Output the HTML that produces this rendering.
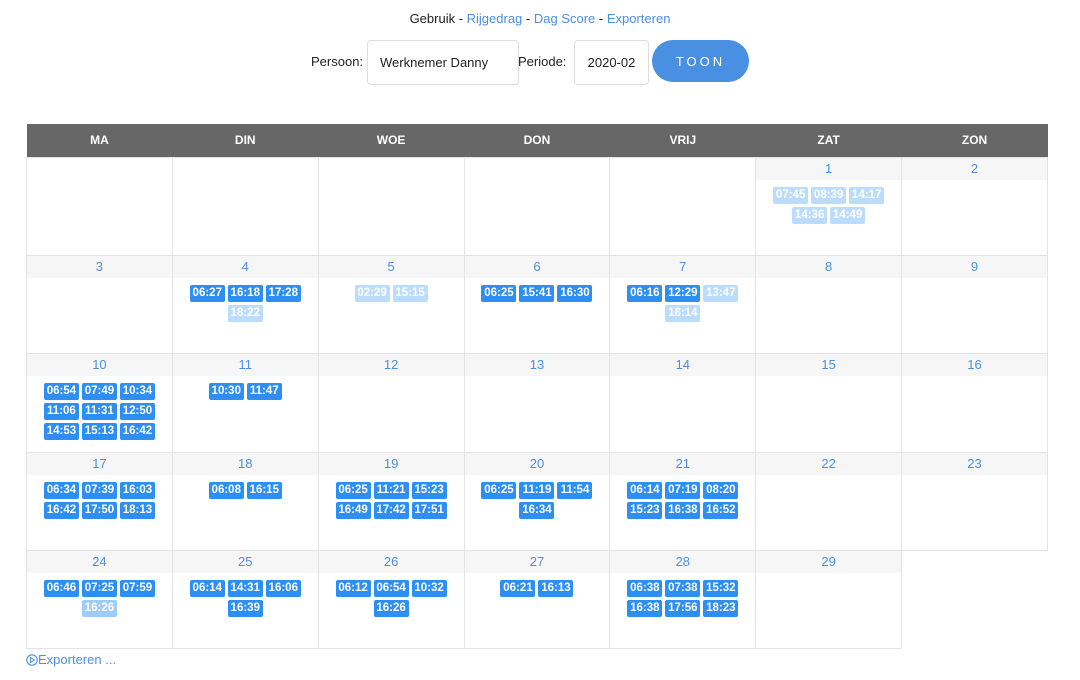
<!DOCTYPE html>
<html><head><meta charset="utf-8"><style>
*{box-sizing:border-box}
body{margin:0;width:1080px;height:680px;background:#fff;font-family:"Liberation Sans",sans-serif;position:relative;overflow:hidden}
.top{position:absolute;top:11px;left:0;width:1080px;text-align:center;font-size:13px;color:#222}
a{color:#4a90e2;text-decoration:none}
.lbl{position:absolute;font-size:13px;color:#222}
.inp{position:absolute;border:1px solid #ddd;border-radius:4px;background:#fff;font-size:13px;color:#222;display:flex;align-items:center;justify-content:center}
.btn{position:absolute;left:652px;top:40px;width:97px;height:42px;border-radius:21px;background:#4a90e2;color:#fff;font-size:13px;letter-spacing:3px;display:flex;align-items:center;justify-content:center}
table{position:absolute;left:26px;top:124px;width:1022px;border-collapse:collapse;table-layout:fixed}
th{background:#676767;color:#fff;font-size:12px;font-weight:bold;height:33px;padding:0}
td{border:1px solid #e3e3e3;height:98.4px;vertical-align:top;padding:0}
td.x{border:none}
.n{height:22px;background:#f6f6f6;color:#4a90e2;font-size:13px;text-align:center;line-height:22px}
.c{width:116px;margin:7px auto 0;display:flex;flex-wrap:wrap;justify-content:center;gap:3px}
.c span{width:35px;height:17px;background:#2d8ef3;color:#fff;font-size:11.5px;font-weight:bold;border-radius:2px;text-align:center;line-height:17px}
.c span.l{background:#bcdcfd}
.c span.m{background:#9fcbf9}
.exp{position:absolute;left:26px;top:652px;font-size:13px;color:#4a90e2;display:flex;align-items:center}
</style></head><body>
<div class="top">Gebruik - <a>Rijgedrag</a> - <a>Dag Score</a> - <a>Exporteren</a></div>
<div class="lbl" style="left:311px;top:54px">Persoon:</div>
<div class="inp" style="left:367px;top:40px;width:152px;height:45px;justify-content:flex-start;padding-left:12px">Werknemer Danny</div>
<div class="lbl" style="left:518px;top:54px">Periode:</div>
<div class="inp" style="left:574px;top:40px;width:75px;height:45px">2020-02</div>
<div class="btn">TOON</div>
<table>
<tr><th>MA</th><th>DIN</th><th>WOE</th><th>DON</th><th>VRIJ</th><th>ZAT</th><th>ZON</th></tr>
<tr><td></td><td></td><td></td><td></td><td></td>
<td><div class="n">1</div><div class="c"><span class="l">07:45</span><span class="l">08:39</span><span class="l">14:17</span><span class="l">14:36</span><span class="l">14:49</span></div></td>
<td><div class="n">2</div></td></tr>
<tr><td><div class="n">3</div></td>
<td><div class="n">4</div><div class="c"><span>06:27</span><span>16:18</span><span>17:28</span><span class="l">18:22</span></div></td>
<td><div class="n">5</div><div class="c"><span class="l">02:29</span><span class="l">15:15</span></div></td>
<td><div class="n">6</div><div class="c"><span>06:25</span><span>15:41</span><span>16:30</span></div></td>
<td><div class="n">7</div><div class="c"><span>06:16</span><span>12:29</span><span class="l">13:47</span><span class="l">18:14</span></div></td>
<td><div class="n">8</div></td><td><div class="n">9</div></td></tr>
<tr><td><div class="n">10</div><div class="c"><span>06:54</span><span>07:49</span><span>10:34</span><span>11:06</span><span>11:31</span><span>12:50</span><span>14:53</span><span>15:13</span><span>16:42</span></div></td>
<td><div class="n">11</div><div class="c"><span>10:30</span><span>11:47</span></div></td>
<td><div class="n">12</div></td><td><div class="n">13</div></td><td><div class="n">14</div></td><td><div class="n">15</div></td><td><div class="n">16</div></td></tr>
<tr><td><div class="n">17</div><div class="c"><span>06:34</span><span>07:39</span><span>16:03</span><span>16:42</span><span>17:50</span><span>18:13</span></div></td>
<td><div class="n">18</div><div class="c"><span>06:08</span><span>16:15</span></div></td>
<td><div class="n">19</div><div class="c"><span>06:25</span><span>11:21</span><span>15:23</span><span>16:49</span><span>17:42</span><span>17:51</span></div></td>
<td><div class="n">20</div><div class="c"><span>06:25</span><span>11:19</span><span>11:54</span><span>16:34</span></div></td>
<td><div class="n">21</div><div class="c"><span>06:14</span><span>07:19</span><span>08:20</span><span>15:23</span><span>16:38</span><span>16:52</span></div></td>
<td><div class="n">22</div></td><td><div class="n">23</div></td></tr>
<tr><td><div class="n">24</div><div class="c"><span>06:46</span><span>07:25</span><span>07:59</span><span class="m">16:26</span></div></td>
<td><div class="n">25</div><div class="c"><span>06:14</span><span>14:31</span><span>16:06</span><span>16:39</span></div></td>
<td><div class="n">26</div><div class="c"><span>06:12</span><span>06:54</span><span>10:32</span><span>16:26</span></div></td>
<td><div class="n">27</div><div class="c"><span>06:21</span><span>16:13</span></div></td>
<td><div class="n">28</div><div class="c"><span>06:38</span><span>07:38</span><span>15:32</span><span>16:38</span><span>17:56</span><span>18:23</span></div></td>
<td><div class="n">29</div></td><td class="x"></td></tr>
</table>
<div class="exp"><svg width="12" height="12" viewBox="0 0 12 12"><circle cx="6" cy="6" r="5.2" fill="none" stroke="#4a90e2" stroke-width="1.1"/><path d="M4.6 3.6 L8.3 6 L4.6 8.4 Z" fill="none" stroke="#4a90e2" stroke-width="1"/></svg>Exporteren ...</div>
</body></html>
